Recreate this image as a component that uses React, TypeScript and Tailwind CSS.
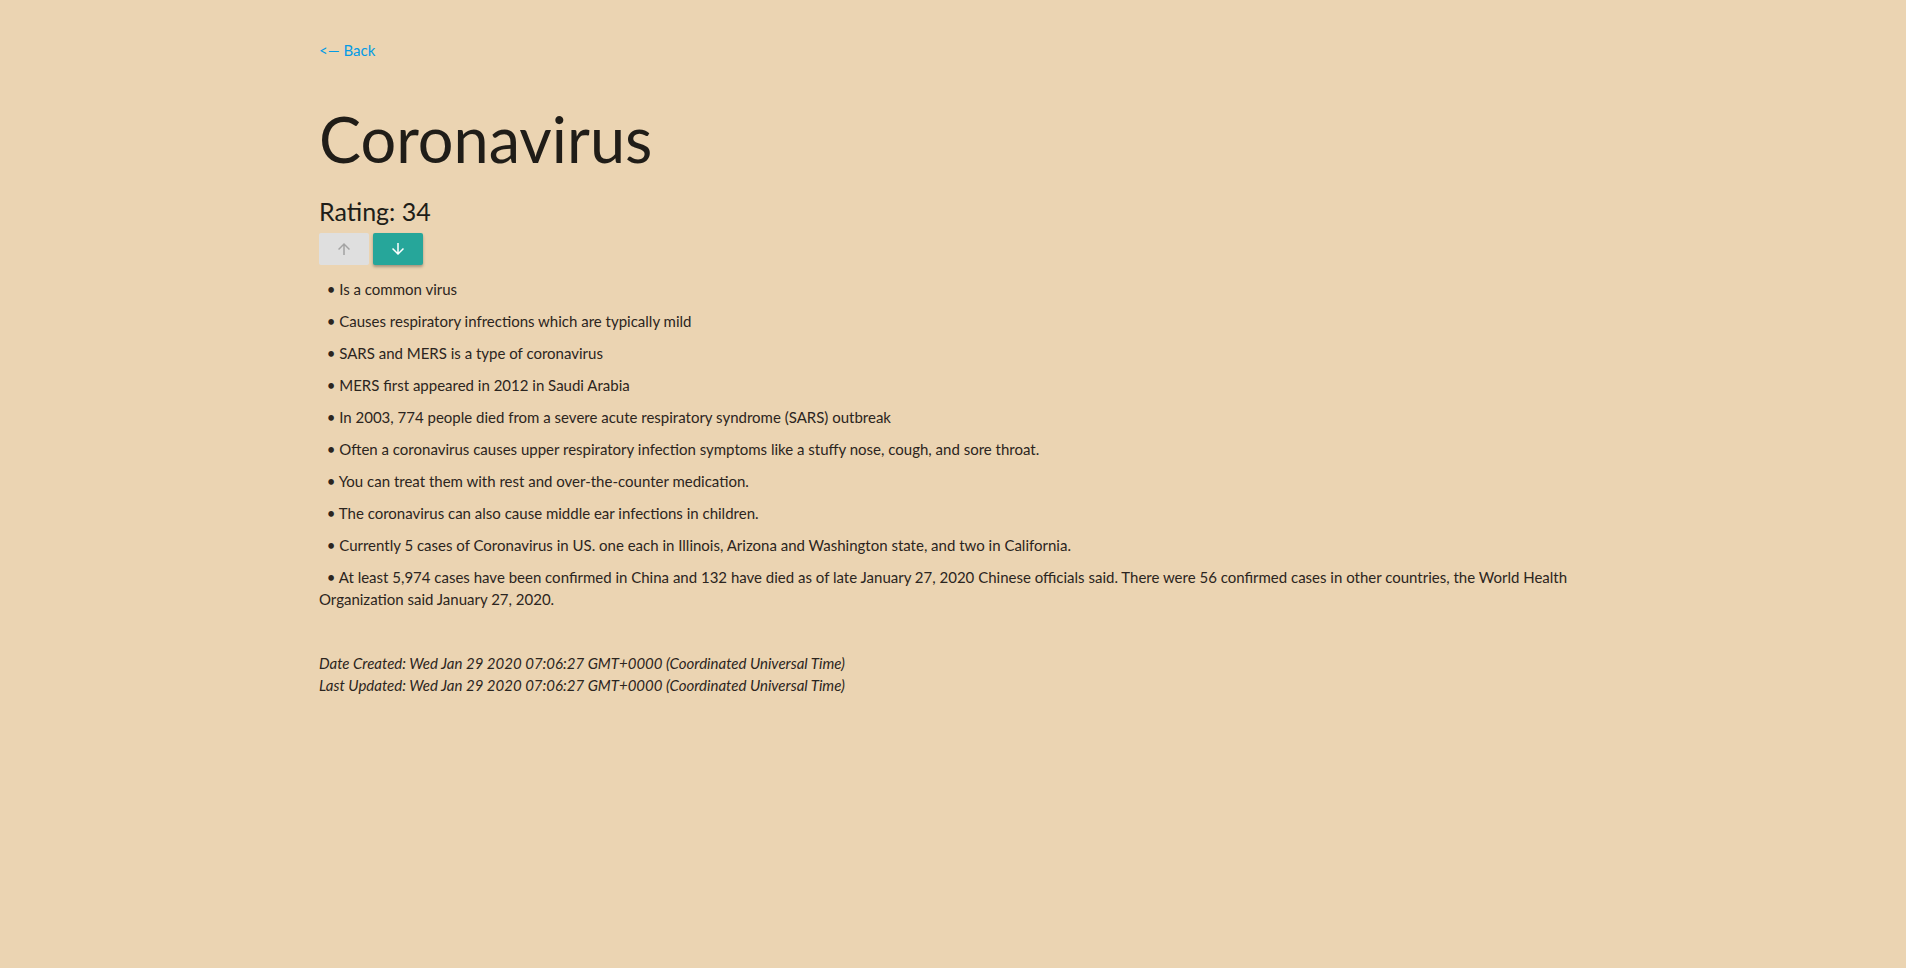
import React from "react";

const facts = [
  "Is a common virus",
  "Causes respiratory infrections which are typically mild",
  "SARS and MERS is a type of coronavirus",
  "MERS first appeared in 2012 in Saudi Arabia",
  "In 2003, 774 people died from a severe acute respiratory syndrome (SARS) outbreak",
  "Often a coronavirus causes upper respiratory infection symptoms like a stuffy nose, cough, and sore throat.",
  "You can treat them with rest and over-the-counter medication.",
  "The coronavirus can also cause middle ear infections in children.",
  "Currently 5 cases of Coronavirus in US. one each in Illinois, Arizona and Washington state, and two in California.",
  "At least 5,974 cases have been confirmed in China and 132 have died as of late January 27, 2020 Chinese officials said. There were 56 confirmed cases in other countries, the World Health Organization said January 27, 2020.",
];

function Arrow({ up }: { up?: boolean }) {
  return (
    <svg width="18" height="18" viewBox="0 0 24 24" fill="currentColor">
      {up ? (
        <path d="M4 12l1.41 1.41L11 7.83V20h2V7.83l5.58 5.59L20 12l-8-8-8 8z" />
      ) : (
        <path d="M20 12l-1.41-1.41L13 16.17V4h-2v12.17l-5.58-5.59L4 12l8 8 8-8z" />
      )}
    </svg>
  );
}

export default function App() {
  return (
    <div className="min-h-screen bg-[#ebd4b2] text-[#2b2520] font-['Lato',sans-serif]">
      <div className="w-[1268px] mx-auto pt-[38px] pb-20">
        {/* back link */}
        <a href="#" className="text-[15px] leading-[20px] text-[#039be5]">
          &lt;— Back
        </a>

        {/* title + rating */}
        <h1 className="mt-[41px] text-[63px] leading-[72px] font-normal text-[#201d18]">
          Coronavirus
        </h1>
        <h4 className="mt-[21px] text-[25px] leading-[30px] text-[#201d18]">Rating: 34</h4>

        <div className="flex gap-[4px] mt-[7px]">
          <button className="w-[50px] h-[32px] rounded-[2px] bg-[#dfdfdf] text-[#a3a3a3] flex items-center justify-center">
            <Arrow up />
          </button>
          <button className="w-[50px] h-[32px] rounded-[2px] bg-[#26a69a] text-white flex items-center justify-center shadow-[0_2px_3px_rgba(0,0,0,0.3)]">
            <Arrow />
          </button>
        </div>

        {/* facts */}
        <div className="mt-[13px] text-[15px] leading-[22px]">
          {facts.map((f) => (
            <p key={f} className="mb-[10px] whitespace-pre-wrap">
              {"  • " + f}
            </p>
          ))}
        </div>

        {/* dates */}
        <div className="mt-[42px] text-[15px] leading-[22px] italic">
          <p>Date Created: Wed Jan 29 2020 07:06:27 GMT+0000 (Coordinated Universal Time)</p>
          <p>Last Updated: Wed Jan 29 2020 07:06:27 GMT+0000 (Coordinated Universal Time)</p>
        </div>
      </div>
    </div>
  );
}
